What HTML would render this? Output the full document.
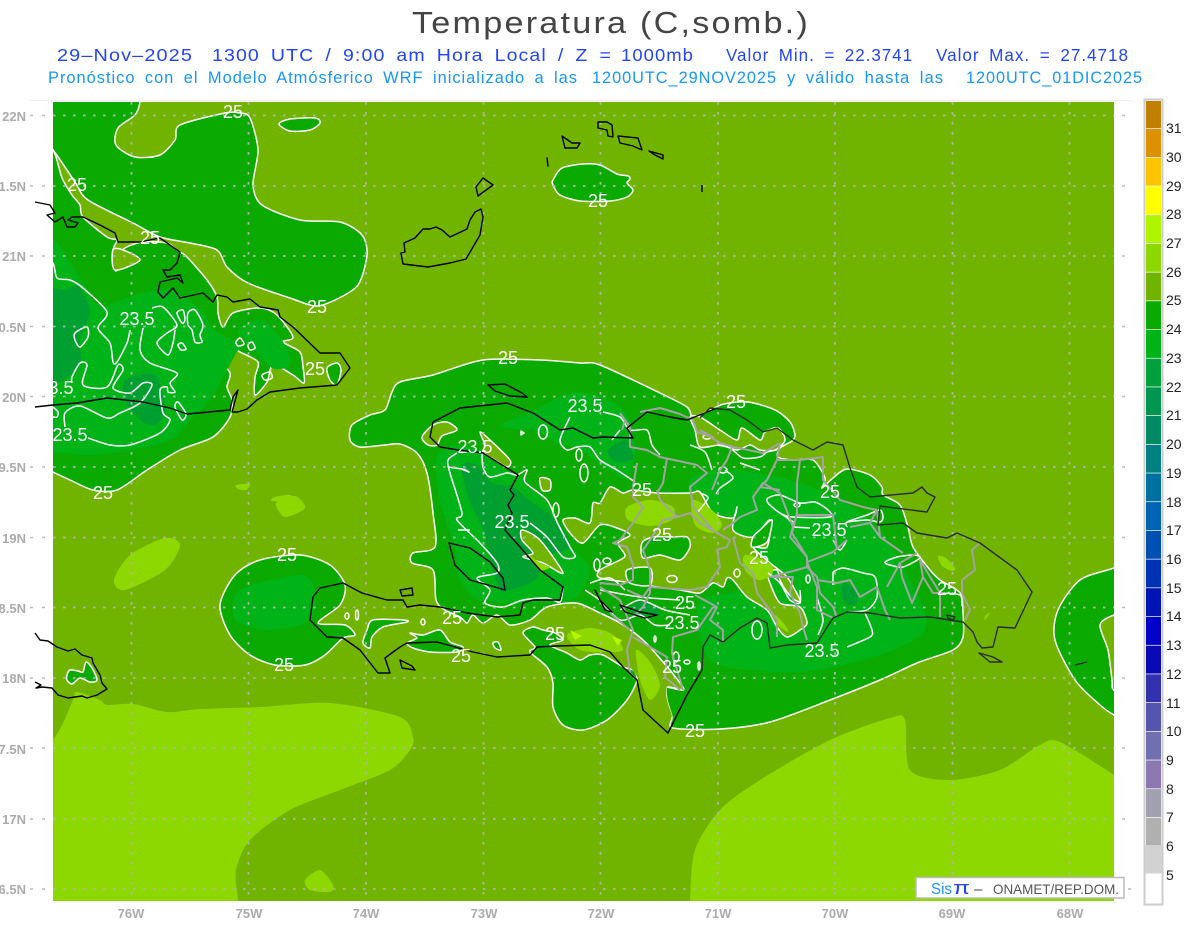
<!DOCTYPE html>
<html><head><meta charset="utf-8"><title>Temperatura</title>
<style>html,body{margin:0;padding:0;background:#fff;width:1200px;height:927px;overflow:hidden}svg{display:block}text{font-family:"Liberation Sans",sans-serif}.w{letter-spacing:1px;word-spacing:4px}</style>
</head><body>
<svg width="1200" height="927" viewBox="0 0 1200 927" xmlns="http://www.w3.org/2000/svg">
<defs><clipPath id="m"><rect x="53" y="102" width="1061" height="799"/></clipPath></defs>
<text x="412" y="33" font-size="31" fill="#444" style="letter-spacing:2px" textLength="398" lengthAdjust="spacingAndGlyphs">Temperatura (C,somb.)</text>
<g font-size="17.5" fill="#2244ff" class="w">
<text x="57" y="61" textLength="136" lengthAdjust="spacingAndGlyphs">29–Nov–2025</text>
<text x="212" y="61" textLength="400" lengthAdjust="spacingAndGlyphs">1300 UTC / 9:00 am Hora Local / Z =</text>
<text x="621" y="61" textLength="73" lengthAdjust="spacingAndGlyphs">1000mb</text>
<text x="726" y="61" textLength="187" lengthAdjust="spacingAndGlyphs">Valor Min. = 22.3741</text>
<text x="936" y="61" textLength="193" lengthAdjust="spacingAndGlyphs">Valor Max. = 27.4718</text>
</g>
<g font-size="17" fill="#1496ff" class="w">
<text x="48" y="83" textLength="530" lengthAdjust="spacingAndGlyphs">Pronóstico con el Modelo Atmósferico WRF inicializado a las</text>
<text x="592" y="83" textLength="185" lengthAdjust="spacingAndGlyphs">1200UTC_29NOV2025</text>
<text x="787" y="83" textLength="157" lengthAdjust="spacingAndGlyphs">y válido hasta las</text>
<text x="966" y="83" textLength="177" lengthAdjust="spacingAndGlyphs">1200UTC_01DIC2025</text>
</g>
<path d="M30 100.5H1133" stroke="#eee"/>
<g clip-path="url(#m)">
<rect x="53" y="102" width="1061" height="799" fill="#70b400"/>
<!-- light 26 regions -->
<g fill="#8cd800" class="s">
<path d="M53 740L63 723 73 700 77 692 100 700 107 705 133 704 167 712 200 709 260 707 330 703 400 717 413 737 410 750 390 770 340 790 290 810 250 840 236 870 238 901 238 925 30 925 30 770Z"/>
<path d="M690 925L690 901 695 850 720 810 760 780 830 740 890 718 905 720 910 770 950 780 1000 770 1040 745 1060 742 1114 775 1135 790 1135 925Z"/>
<path d="M114 580L130 555 165 538 180 545 165 570 125 590Z"/>
<path d="M276 503L295 496 305 508 285 517Z"/>
<path d="M305 880L320 870 333 885 330 892 310 890Z"/>
<path d="M236 485L250 484 246 490 238 489Z"/>
<path d="M275 497L290 495 295 501 272 501Z"/>
<path d="M938 556L946 558 955 568 952 571 942 566Z"/>
<path d="M985 616L990 613 985 620Z"/>
</g>
<!-- 25 regions -->
<g fill="#0aaa00" stroke="#fff" stroke-width="1.5" stroke-linejoin="round" class="s">
<path d="M30 85L140 85 140 102 135 115 118 128 116 145 135 157 160 155 175 140 180 125 225 113 240 113 250 118 258 150 253 185 262 205 300 220 340 222 362 235 367 255 358 285 335 300 315 306 290 298 248 283 227 267 217 250 190 243 160 237 133 223 88 200 75 182 53 150 30 125Z"/>
<path d="M30 125L53 150 62 178 72 195 80 205 83 217 107 237 117 240 113 250 115 270 121 268 140 260 123 250 142 242 167 243 177 250 187 257 207 280 217 297 218 313 223 327 233 313 260 308 277 315 293 337 283 342 300 352 303 367 304 383 293 375 273 365 267 382 255 395 255 377 258 362 240 352 230 347 217 355 230 373 227 387 232 400 230 417 213 437 180 450 147 470 117 490 93 490 70 480 53 472 30 462Z"/>
<path d="M279 124L290 119 315 118 320 123 310 130 290 131Z"/>
<path d="M553 180L562 168 583 164 600 165 617 174 628 176 630 179 627 183 633 190 627 197 610 201 580 201 560 195 553 185Z"/>
<path d="M220 605L235 575 260 560 300 555 330 565 345 585 340 605 318 623 345 625 355 635 343 638 325 655 305 665 275 665 250 655 230 635Z"/>
<path d="M350 440L352 425 370 415 385 410 392 392 400 382 433 375 483 360 540 360 580 363 600 365 660 393 687 407 693 417 710 410 724 404 748 402 775 410 790 422 795 435 792 441 780 448 778 457 793 460 813 460 825 478 822 488 833 478 847 469 870 475 882 487 883 495 900 505 908 527 913 547 930 570 940 580 960 593 963 613 963 637 953 650 917 663 880 680 830 700 770 722 720 729 673 728 672 717 667 700 667 687 683 690 680 683 663 662 643 640 620 623 600 613 576 603 547 607 530 620 510 625 497 615 483 623 473 615 467 623 460 617 445 610 436 600 433 570 412 563 413 553 435 547 433 513 427 473 417 453 400 444 385 445 360 447Z"/>
<path d="M530 652L547 667 553 683 553 707 563 725 583 730 607 720 627 700 637 680 633 670 623 667 603 655 590 655 580 660 567 653 550 645 563 640 555 633 543 630 533 627 523 633 535 647Z"/>
<path d="M1135 558L1114 568 1080 580 1058 610 1055 640 1075 680 1100 705 1114 715 1135 725Z"/>
<path d="M327 368L337 363 341 370 337 385 330 380Z"/>
<path d="M67 675L70 670 78 671 83 672 86 662 92 668 97 680 90 682 80 678 72 684 67 680Z"/>
</g>
<!-- medium greens -->
<g fill="#00b418" class="s">
<path d="M30 240L54 240 75 270 100 305 135 295 170 290 200 310 215 330 240 345 235 355 210 400 190 420 170 440 130 450 90 455 54 452 30 452Z"/>
<path d="M238 330L262 320 285 345 290 365 272 368 250 345Z"/>
<path d="M500 425L535 410 570 393 600 397 625 412 635 450 625 478 600 463 575 447 560 445 535 430 520 430Z"/>
<path d="M437 457L457 445 480 450 505 470 525 480 548 505 570 545 590 570 575 598 540 603 480 600 460 580 455 550 440 500Z"/>
<path d="M690 480L730 470 790 480 840 500 880 530 915 590 925 630 880 655 800 672 720 665 700 640 700 600 740 590 760 560 700 530Z"/>
<path d="M240 590L300 575 315 590 310 620 270 630 235 620Z"/>
</g>
<g fill="#00a030" class="s">
<path d="M30 290L65 290 78 285 90 310 80 340 80 365 54 385 30 385Z"/>
<path d="M125 380L155 375 165 410 155 425 140 420 125 400Z"/>
<path d="M462 465L477 465 493 483 513 487 533 503 557 520 570 547 547 557 535 580 510 590 500 590 490 560 483 530 468 497Z"/>
<path d="M608 450L625 440 632 450 632 460 615 462Z"/>
<path d="M843 583L855 590 857 603 850 605 843 600Z"/>
<path d="M630 610L640 600 660 610 655 618 640 615Z"/>
</g>
<!-- olive interior -->
<g fill="#70b400" stroke="#fff" stroke-width="1.5" stroke-linejoin="round" class="s">
<path d="M563 520L575 518 590 523 593 503 600 503 610 487 623 493 633 490 657 493 690 493 700 492 713 513 733 518 737 507 733 530 753 537 770 520 767 547 753 547 770 563 787 577 800 600 795 600 787 592 780 580 777 570 768 573 770 583 780 603 800 607 807 623 800 630 787 637 777 627 767 610 747 597 733 580 727 578 723 587 713 583 700 593 680 590 657 587 633 583 600 578 600 570 620 560 625 555 618 543 630 535 617 528 600 525 583 543 570 533Z"/>
<path d="M480 432L490 440 510 460 507 467 495 460 483 452 485 445Z"/>
<path d="M422 437L433 425 447 422 457 430 442 436 437 445 428 445Z"/>
<path d="M522 530L540 540 563 573 543 563 523 557 533 553 522 540Z"/>
<path d="M540 478L550 480 550 490 542 490Z"/>
<path d="M690 417L700 417 720 430 737 440 742 428 760 440 765 432 778 428 785 440 775 450 760 450 750 445 737 450 720 445 700 447 695 430Z"/>
<path d="M605 640L620 623 643 640 663 662 680 683 667 687 667 700 672 717 660 700 640 680 625 660Z" stroke="none"/>
<path d="M600 613L620 623 643 640 663 662 680 683 683 690 667 687" fill="none"/>
<path d="M1135 610L1114 615 1100 625 1108 650 1112 680 1114 690 1135 695Z"/>
<path d="M113 250L115 270 140 260 123 250Z"/>
</g>
<!-- green holes -->
<g fill="#0aaa00" stroke="#fff" stroke-width="1.5" stroke-linejoin="round" class="s">
<path d="M642 543L653 537 672 537 687 537 690 547 680 560 660 555 643 558Z"/>
<path d="M627 570L650 568 650 585 630 583Z"/>
<path d="M373 620L403 620 407 622 383 627 372 637 370 648 363 643 367 630Z"/>
<path d="M410 633L423 635 440 630 450 642 463 647 457 652 430 652 413 648 407 643 417 638Z"/>
<path d="M493 643L498 642 501 650 495 648Z"/>
<path d="M768 498L780 495 800 503 815 502 828 510 830 517 793 517 780 513 768 503Z" fill="#00b418"/>
<path d="M772 520L760 530 753 537 752 547 767 542Z"/>
</g>
<!-- lighter on olive -->
<g fill="#8cd800" class="s">
<path d="M627 507L650 500 673 507 672 520 650 526 628 520Z"/>
<path d="M692 500L712 510 722 525 712 533 695 525Z"/>
<path d="M745 555L770 563 772 575 758 580 745 570Z"/>
<path d="M567 635L590 628 612 634 623 650 605 652 580 650Z"/>
<path d="M636 650L650 662 660 685 650 700 640 680Z"/>
<path d="M775 615L785 625 788 632 778 625Z"/>
<path d="M528 555L540 563 550 567 540 570Z"/>
</g>
<g fill="#b4f500"><path d="M570 630L582 636 575 640ZM612 636L622 640 618 646Z"/></g>
<!-- 23.5 + inner contours -->
<g fill="none" stroke="#fff" stroke-width="1.5" stroke-linejoin="round" class="s">
<path d="M40 250L53 263 57 278 70 280 83 288 107 312 98 328 110 343 113 362 117 362 127 343 130 330"/>
<path d="M143 328L140 350 150 363 177 373 170 383 175 392 168 392 167 387 160 390 163 413 170 420 160 433 130 445 110 445 88 438"/>
<path d="M65 427L65 413 80 406 107 418 120 413 140 403 152 385 143 383 130 393 113 388 123 370 118 365 107 387 83 385 87 365 80 363 72 377 72 383"/>
<path d="M75 333L87 327 88 337 80 347 75 340Z"/>
<path d="M152 308L163 307 177 325 167 333 157 343 168 355 173 343 175 330"/>
<path d="M177 313L183 310 185 320 182 323ZM188 313L195 310 203 325 200 335 202 342 195 342 192 330 188 325ZM178 345L182 343 186 349 181 350ZM262 375L270 372 272 378 265 380ZM236 342L240 338 244 344 238 346ZM248 345L252 342 255 348 250 350ZM53 407L58 412 57 417 53 417"/>
<path d="M175 407L182 420 186 414 178 402Z"/>
<path d="M457 453L448 460 450 473 462 513 457 520 480 543 497 563 497 573 477 578 490 590 485 603 503 607 523 600 547 598 560 602 563 587"/>
<path d="M482 453L483 467 490 477 507 473 517 475 527 470 525 482 547 500 557 522 570 547 575 557 563 557 547 537 530 523"/>
<path d="M570 417L560 440 567 450 577 447 590 447 600 460 617 470 635 482"/>
<path d="M603 412L620 417 630 430 647 430 652 445 660 455"/>
<path d="M458 530L470 530"/>
<path d="M521 431l3 2-3 2zM448 467l14 2 7 3-5-3"/>
<ellipse cx="543" cy="432" rx="4.5" ry="7"/><ellipse cx="579" cy="455" rx="3" ry="6"/><ellipse cx="584" cy="473" rx="4" ry="9"/>
<ellipse cx="556" cy="510" rx="3" ry="7"/><ellipse cx="597" cy="565" rx="3" ry="6"/><ellipse cx="607" cy="561" rx="4" ry="3"/><ellipse cx="672" cy="579" rx="5" ry="3.5"/>
<ellipse cx="737" cy="573" rx="3" ry="4"/><ellipse cx="797" cy="505" rx="3" ry="2"/><ellipse cx="808" cy="579" rx="2" ry="4"/><ellipse cx="707" cy="437" rx="4" ry="2"/><ellipse cx="723" cy="470" rx="4" ry="3"/>
<ellipse cx="687" cy="662" rx="3" ry="2"/><ellipse cx="699" cy="666" rx="1" ry="4"/><ellipse cx="676" cy="657" rx="3" ry="5"/><ellipse cx="757" cy="630" rx="5" ry="9"/><ellipse cx="655" cy="639" rx="1" ry="3"/>
<ellipse cx="423" cy="622" rx="2" ry="3"/><ellipse cx="357" cy="615" rx="1.5" ry="5"/><ellipse cx="347" cy="616" rx="2" ry="3"/>
<path d="M600 590L640 597 680 600M620 610L640 600 665 610 690 615M600 600L620 620 640 615 655 625 670 625M590 583L610 578 625 590M585 590L600 600"/>
<path d="M793 527L810 528M795 527L785 515"/>
<path d="M847 527L847 522 867 515 880 510 883 517 880 522 867 520 847 522M847 540L840 550 833 540"/>
<path d="M833 572L843 568 863 573 875 577 877 597 867 610 848 612M833 572L833 585"/>
<path d="M865 613L872 630 870 637 847 647"/>
<path d="M885 562L897 557 913 555 920 558 903 567 890 565Z"/>
<path d="M817 597L823 620 818 635M717 445L730 448 743 458 760 457 767 452 777 450"/>
<path d="M725 470L733 478 720 488 716 494M740 463L760 470"/>
<path d="M620 430L612 440M690 445L705 452 712 470"/>
<path d="M780 513L795 523M768 573L780 583 790 600 800 603 800 590"/>
<path d="M940 593L960 595 962 606"/>
<path d="M697 513L708 498 700 493"/>
</g>
<!-- grid -->
<g stroke="#b2b2b2" stroke-width="1.8" stroke-dasharray="2.6 7.4" fill="none">
<path d="M131.500 102V905M248.500 102V905M366 102V905M483.500 102V905M600.500 102V905M718 102V905M835 102V905M952.500 102V905M1069.500 102V905"/>
<path d="M53 115.500H1114M53 186H1114M53 256H1114M53 326.500H1114M53 396.500H1114M53 467H1114M53 537.500H1114M53 607.500H1114M53 678H1114M53 748H1114M53 819H1114M53 889H1114"/>
</g>
</g>
<!-- outside ticks -->
<g stroke="#bbb" stroke-width="1.500" stroke-dasharray="3 9" fill="none">
<path d="M30 115.500H53M30 186H53M30 256H53M30 326.500H53M30 396.500H53M30 467H53M30 537.500H53M30 607.500H53M30 678H53M30 748H53M30 819H53M30 889H53"/>
<path d="M1122 115.500H1134M1122 186H1134M1122 256H1134M1122 326.500H1134M1122 396.500H1134M1122 467H1134M1122 537.500H1134M1122 607.500H1134M1122 678H1134M1122 748H1134M1122 819H1134M1128 889H1134"/>
</g>
<g fill="none" stroke-linejoin="round">
<!-- province lines -->
<g stroke="#a3a3a3" stroke-width="2">
<path d="M640 412L660 408 680 414 693 420 697 432 713 437 700 430M620 413L630 427 630 447 647 450 660 457 697 465 707 473 690 487 693 507 713 530M667 458L663 483 657 493"/>
<path d="M637 463L633 487 633 497 643 507 633 523 620 540 613 543 627 547 633 565 633 580 620 585 600 583M600 587L620 600 633 630 627 650 630 673 637 680"/>
<path d="M657 490L660 500 677 517 690 513 700 523 717 533 730 540 727 547 717 550 720 567 713 577 707 587 690 590 650 587 643 597 627 590"/>
<path d="M677 517L663 520 650 540 643 550 650 570 650 593 643 607 635 615"/>
<path d="M733 537L740 563 753 573 757 593 770 610 777 620 777 637M770 577L793 577 790 593 800 613 803 627 807 640"/>
<path d="M780 493L763 483 753 497 757 510 740 517 733 523 723 530M780 493L793 527 790 537 807 557 807 567 797 570 770 577M807 567L817 577 820 593 833 607 837 617"/>
<path d="M695 595L717 607 710 620 723 630 723 643M713 607L697 630 673 637 672 653 683 690M610 613L630 630M633 637L667 657 665 677 680 690"/>
<path d="M700 430L720 443 733 447 763 453 780 443M732 447L727 460 720 470 712 490M780 443L777 460 767 480 760 487 780 490M777 460L800 460 823 457 823 480 840 500 863 507 877 510"/>
<path d="M800 460L797 483 797 513 792 533 807 557M797 515L833 515 837 550M807 562L833 552 847 540M807 562L817 587 817 610 833 618M817 580L837 583 850 580 860 597 877 587 885 610 890 620"/>
<path d="M870 523L880 537 903 553M877 510L880 537M850 527L870 523 877 510M917 553L900 563 887 587M900 563L902 577 912 603 923 577 920 560M923 577L933 593 943 593M920 560L940 593 940 617"/>
<path d="M980 543L972 550 975 570 962 580 962 593 970 610 965 620M625 420L622 430"/>
</g>
<!-- coasts -->
<g stroke="#000" stroke-width="1.400">
<path d="M35 202L50 205 55 213 47 215 55 222 63 217 67 227 75 227 78 223 68 220 72 217 83 217 100 225 115 233 118 242 140 242 160 238 180 252 177 263 170 270 163 270 167 277 180 275 183 283 177 278 160 282 158 292 163 298 173 288 180 298 203 293 213 302 217 295 227 297 233 302 250 299 260 307 278 310 280 317 293 327 320 353 340 353 350 368 337 385 300 388 270 392 257 400 247 409 238 412 232 412 238 390 233 397 230 410 187 414 170 408 143 402 107 398 77 403 53 405 35 407"/>
<path d="M35 633L40 640 48 641 57 647 68 651 75 649 82 655 92 658 93 663 100 675 102 683 107 689 97 695 87 698 82 696 68 698 58 695 52 688 42 687 36 688 41 685 35 682"/>
<path d="M401 253L405 252 404 243 415 238 423 229 430 229 436 227 442 230 450 237 467 229 470 220 475 212 481 209 483 217 480 235 466 259 450 263 428 267 403 264Z"/>
<path d="M483 178L493 185 478 196 476 187ZM562 136L572 143 580 143 577 148 565 148ZM598 122L607 122 612 125 613 137 608 136 607 130 598 128ZM618 136L638 138 642 150 633 146 620 143ZM649 151L663 155 663 159 655 155ZM547 158L548 166ZM702 185L702 192"/>
<path d="M488 385L505 384 522 393 527 397 510 396 495 391Z"/>
<path d="M433 422L460 408 507 403 533 413 560 430 573 428 593 438 603 437 633 438 627 428 647 412 670 417 687 420 717 408"/>
<path d="M433 422L430 437 440 447 458 450 483 453 507 468 518 475 510 490 514 495 508 505 512 513 505 530 520 547 540 570 563 587 560 600 533 600 523 603 520 615 497 617 467 613 440 607 420 605 407 607 403 600 387 600 362 593 343 583 320 588 313 597 310 620 327 637 343 638 360 650 378 673 390 673 385 658 400 647 407 643 437 642 473 652 497 657 530 655 537 647 557 646 590 645 610 652 623 667 637 680 643 710 668 733 687 695 702 670"/>
<path d="M449 543L470 548 490 562 503 578 505 590 495 587 470 580 455 565Z"/>
<path d="M400 660L412 666 415 670 402 668ZM595 590L605 610 612 612 600 600ZM620 605L640 612 657 615 645 618 625 612Z"/>
<path d="M400 590L412 588 413 595 402 596Z"/>
</g>
<g stroke="#2b2b2b" stroke-width="1.400">
<path d="M700 418L710 408 730 410 747 420 763 432 777 428 793 440 813 450 827 442 843 445 850 468 857 487 870 497 913 493 922 487 927 493 935 497 927 512 880 506 878 525 903 523 917 533 947 538 957 533 980 543 1017 570 1032 592 1015 628 998 627 993 647 982 648 977 642 973 632 963 622 930 617 900 618 870 613 847 612 833 618 817 643 787 645 770 648 767 623 757 618 740 628 723 642 710 635 703 647 702 670"/>
<path d="M979 653L993 657 1002 662 990 662ZM947 615L955 617 953 620 948 618ZM1075 665L1087 662"/>
</g>
</g>
<!-- contour labels -->
<g fill="#fff" font-size="18" text-anchor="middle">
<text x="233" y="118">25</text><text x="77" y="191">25</text><text x="150" y="244">25</text><text x="317" y="313">25</text>
<text x="137" y="325">23.5</text><text x="315" y="375">25</text><text x="61" y="394">3.5</text><text x="70" y="441">23.5</text><text x="103" y="499">25</text>
<text x="598" y="207">25</text><text x="508" y="364">25</text><text x="585" y="412">23.5</text><text x="736" y="408">25</text><text x="475" y="453">23.5</text>
<text x="642" y="496">25</text><text x="830" y="498">25</text><text x="512" y="528">23.5</text><text x="829" y="536">23.5</text><text x="662" y="541">25</text>
<text x="759" y="564">25</text><text x="287" y="561">25</text><text x="947" y="595">25</text><text x="685" y="609">25</text><text x="452" y="624">25</text>
<text x="682" y="629">23.5</text><text x="555" y="640">25</text><text x="822" y="657">23.5</text><text x="461" y="662">25</text><text x="284" y="671">25</text>
<text x="672" y="673">25</text><text x="695" y="737">25</text>
</g>
<!-- axis labels -->
<g fill="#ababab" font-size="13" font-weight="bold" text-anchor="end">
<text x="26" y="121">22N</text><text x="26" y="191">1.5N</text><text x="26" y="261">21N</text><text x="26" y="332">0.5N</text><text x="26" y="402">20N</text>
<text x="26" y="472">9.5N</text><text x="26" y="543">19N</text><text x="26" y="613">8.5N</text><text x="26" y="683">18N</text><text x="26" y="754">7.5N</text><text x="26" y="824">17N</text><text x="26" y="894">6.5N</text>
</g>
<g fill="#ababab" font-size="13" font-weight="bold" text-anchor="middle">
<text x="131" y="918">76W</text><text x="249" y="918">75W</text><text x="366" y="918">74W</text><text x="484" y="918">73W</text><text x="601" y="918">72W</text>
<text x="718" y="918">71W</text><text x="835" y="918">70W</text><text x="952" y="918">69W</text><text x="1070" y="918">68W</text>
</g>
<!-- credit box -->
<rect x="916" y="877.500" width="208" height="20.500" fill="#fff" stroke="#bbb" stroke-width="1.500"/>
<text x="931" y="894" font-size="16" fill="#1496ff" textLength="21" lengthAdjust="spacingAndGlyphs">Sis</text>
<text x="953" y="894" font-size="18" fill="#2244ff" textLength="17" lengthAdjust="spacingAndGlyphs">π</text>
<text x="974" y="894" font-size="15" fill="#444">–</text>
<text x="993" y="894" font-size="14" fill="#555" textLength="126" lengthAdjust="spacingAndGlyphs">ONAMET/REP.DOM.</text>
<!-- colorbar -->
<rect x="1144.500" y="99.500" width="18" height="805" fill="#fff" stroke="#ccc" stroke-width="2"/>
<g>
<rect x="1146" y="101" width="15" height="27.300" fill="#bf8000"/>
<rect x="1146" y="129" width="15" height="28" fill="#dc9200"/>
<rect x="1146" y="157.700" width="15" height="28" fill="#ffc400"/>
<rect x="1146" y="186.400" width="15" height="28" fill="#ffff00"/>
<rect x="1146" y="215.100" width="15" height="28" fill="#b0f500"/>
<rect x="1146" y="243.800" width="15" height="28" fill="#8cd800"/>
<rect x="1146" y="272.500" width="15" height="28" fill="#70b400"/>
<rect x="1146" y="301.200" width="15" height="28" fill="#0aaa00"/>
<rect x="1146" y="329.900" width="15" height="28" fill="#00b418"/>
<rect x="1146" y="358.600" width="15" height="28" fill="#00a03c"/>
<rect x="1146" y="387.300" width="15" height="28" fill="#009650"/>
<rect x="1146" y="416" width="15" height="28" fill="#008a64"/>
<rect x="1146" y="444.700" width="15" height="28" fill="#008080"/>
<rect x="1146" y="473.400" width="15" height="28" fill="#0070a0"/>
<rect x="1146" y="502.100" width="15" height="28" fill="#0064b4"/>
<rect x="1146" y="530.800" width="15" height="28" fill="#0050b4"/>
<rect x="1146" y="559.500" width="15" height="28" fill="#0032b4"/>
<rect x="1146" y="588.200" width="15" height="28" fill="#0014b4"/>
<rect x="1146" y="616.900" width="15" height="28" fill="#0000c8"/>
<rect x="1146" y="645.600" width="15" height="28" fill="#0a0ab4"/>
<rect x="1146" y="674.300" width="15" height="28" fill="#3232b0"/>
<rect x="1146" y="703" width="15" height="28" fill="#5555b0"/>
<rect x="1146" y="731.700" width="15" height="28" fill="#7070b0"/>
<rect x="1146" y="760.400" width="15" height="28" fill="#8c78b0"/>
<rect x="1146" y="789.100" width="15" height="28" fill="#a0a0ae"/>
<rect x="1146" y="817.800" width="15" height="27.500" fill="#b0b0b0"/>
<rect x="1145" y="845.500" width="17" height="28" fill="#d2d2d2"/>
</g>
<g fill="#222" font-size="14">
<text x="1166" y="133">31</text><text x="1166" y="162">30</text><text x="1166" y="191">29</text><text x="1166" y="219">28</text><text x="1166" y="248">27</text><text x="1166" y="277">26</text><text x="1166" y="305">25</text><text x="1166" y="334">24</text><text x="1166" y="363">23</text><text x="1166" y="392">22</text><text x="1166" y="420">21</text><text x="1166" y="449">20</text><text x="1166" y="478">19</text><text x="1166" y="507">18</text><text x="1166" y="535">17</text><text x="1166" y="564">16</text><text x="1166" y="593">15</text><text x="1166" y="621">14</text><text x="1166" y="650">13</text><text x="1166" y="679">12</text><text x="1166" y="708">11</text><text x="1166" y="736">10</text>
<text x="1166" y="765">9</text><text x="1166" y="794">8</text><text x="1166" y="822">7</text><text x="1166" y="851">6</text><text x="1166" y="880">5</text>
</g>
</svg>
<script>
document.querySelectorAll('.s path').forEach(function(p){
var d=p.getAttribute('d');
if(/[^MLZ\d\s.\-]/.test(d))return;
var out='';
d.split('M').forEach(function(sp){
if(!sp.trim())return;
var closed=/Z/.test(sp);
var n=sp.match(/-?[\d.]+/g).map(Number),pts=[];
for(var i=0;i+1<n.length;i+=2)pts.push([n[i],n[i+1]]);
var L=pts.length;
if(L<3){out+='M'+pts.map(function(q){return q.join(' ')}).join('L');return;}
var k=0.14;
function g(i){return closed?pts[(i+L)%L]:pts[Math.max(0,Math.min(L-1,i))];}
out+='M'+pts[0][0]+' '+pts[0][1];
var m=closed?L:L-1;
for(var j=0;j<m;j++){
var a=g(j-1),b=g(j),c=g(j+1),e=g(j+2);
out+='C'+(b[0]+(c[0]-a[0])*k).toFixed(1)+' '+(b[1]+(c[1]-a[1])*k).toFixed(1)+' '+(c[0]-(e[0]-b[0])*k).toFixed(1)+' '+(c[1]-(e[1]-b[1])*k).toFixed(1)+' '+c[0]+' '+c[1];
}
if(closed)out+='Z';
});
p.setAttribute('d',out);
});
</script>
</body></html>
